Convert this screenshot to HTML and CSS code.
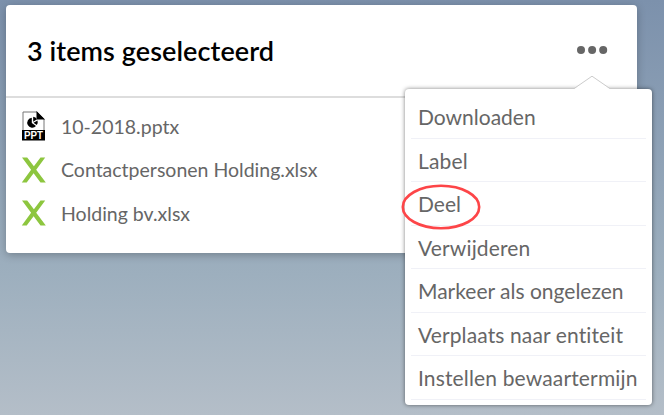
FILE: index.html
```html
<!DOCTYPE html>
<html lang="nl">
<head>
<meta charset="utf-8">
<title>Selectie</title>
<link rel="stylesheet" href="styles.css">
</head>
<body>
<main class="card">
  <header class="card-header">
    <h1 class="title">3 items geselecteerd</h1>
    <div class="more">
      <svg class="dots" width="32" height="10" viewBox="0 0 32 10"><circle cx="5" cy="5" r="4"/><circle cx="16.1" cy="5" r="4"/><circle cx="27.2" cy="5" r="4"/></svg>
      <nav class="menu">
        <svg class="arrow" width="38" height="15" viewBox="0 0 38 15"><path class="arrow-fill" d="M1 15V14L19 1.5L37 14V15Z"/><path class="arrow-line" d="M1 13.6L19 1.2L37 13.6"/></svg>
        <ul class="menu-list">
          <li><span>Downloaden</span></li>
          <li><span class="looser">Label</span></li>
          <li class="marked"><span>Deel</span><svg class="ring" width="80" height="48" viewBox="0 0 80 48"><ellipse cx="40" cy="24" rx="38.2" ry="21.2"/></svg></li>
          <li><span class="looser">Verwijderen</span></li>
          <li><span>Markeer als ongelezen</span></li>
          <li><span class="loose">Verplaats naar entiteit</span></li>
          <li><span class="looser">Instellen bewaartermijn</span></li>
        </ul>
      </nav>
    </div>
  </header>
  <ul class="files">
    <li>
      <svg class="icon" width="24" height="30" viewBox="0 0 24 30"><path class="page" d="M1 20V1H15L22 8V20Z"/><path d="M14.5 0L23 8.5H14.5Z"/><path d="M9.8 6.7V12L14 15A5 5 0 1 1 9.8 6.7Z"/><path d="M11.2 5.8A5 5 0 0 1 15 8.3L11.2 10.7Z"/><path d="M11.5 11.8L15.5 9.5A5 5 0 0 1 14.8 14Z"/><rect y="19" width="23" height="10.5"/><text x="2" y="28" textLength="19" lengthAdjust="spacingAndGlyphs">PPT</text></svg>
      <span>10-2018.pptx</span>
    </li>
    <li>
      <svg class="icon sheet" width="24" height="30" viewBox="0 0 24 30"><path d="M0 2.5H5.2L11.9 11.3L18.5 2.5H23.2L14.2 14.7L23.8 27.5H18.5L11.6 18.2L4.7 27.5H-.2L9.1 14.8Z"/></svg>
      <span>Contactpersonen Holding.xlsx</span>
    </li>
    <li>
      <svg class="icon sheet" width="24" height="30" viewBox="0 0 24 30"><path d="M0 2.5H5.2L11.9 11.3L18.5 2.5H23.2L14.2 14.7L23.8 27.5H18.5L11.6 18.2L4.7 27.5H-.2L9.1 14.8Z"/></svg>
      <span>Holding bv.xlsx</span>
    </li>
  </ul>
</main>
</body>
</html>
```
FILE: styles.css
```css
* { box-sizing: border-box; }
html { height: 100%; }
body {
  margin: 0;
  height: 415px;
  padding: 5px 27px 0 6px;
  overflow: hidden;
  background: linear-gradient(#7c91ac 0, #9dafbe 275px, #b4bec8 415px);
  color: #666;
  font-family: Lato, "Liberation Sans", sans-serif;
  font-variant-ligatures: none;
}
ul { list-style: none; margin: 0; padding: 0; }
.card {
  height: 248px;
  background: #fff;
  border-radius: 4px;
  box-shadow: 0 2px 8px rgba(0, 0, 0, .25);
}
.card-header {
  height: 93px;
  display: flex;
  align-items: center;
  justify-content: space-between;
  padding: 0 29px 2px 21px;
  border-bottom: 2px solid #ddd;
}
.title {
  margin: 0;
  padding-top: 2px;
  color: #000;
  font-size: 27px;
  font-weight: 600;
  line-height: 32px;
  letter-spacing: .08px;
}
.more { position: relative; display: flex; }
.dots { fill: #666; }
.menu {
  position: absolute;
  top: 44px;
  right: -44px;
  width: 247px;
  height: 316px;
  padding: 6.5px 6px 0;
  background: #fff;
  border-radius: 4px;
  box-shadow: 0 0 4px rgba(0, 0, 0, .5);
}
.arrow { position: absolute; top: -14px; left: 168px; }
.arrow-fill { fill: #fff; }
.arrow-line { fill: none; stroke: #ccc; }
.menu-list li {
  height: 43.5px;
  padding-left: 7px;
  border-bottom: 1px solid #f0f1f7;
  font-size: 21px;
  line-height: 44px;
  white-space: nowrap;
}
.loose { letter-spacing: .12px; }
.looser { letter-spacing: .15px; }
.marked { position: relative; }
.ring { position: absolute; top: .5px; left: -10.5px; fill: none; stroke: #fd4548; stroke-width: 2.6; }
.files { padding: 6.5px 16px; }
.files li {
  height: 43.5px;
  display: flex;
  align-items: center;
  gap: 15px;
  font-size: 19.5px;
}
.icon { flex: none; overflow: visible; }
.icon .page { fill: #fff; stroke: #777; }
.icon text { fill: #fff; font: bold 11px "Liberation Sans", sans-serif; }
.sheet { fill: #8dc63f; }
```
